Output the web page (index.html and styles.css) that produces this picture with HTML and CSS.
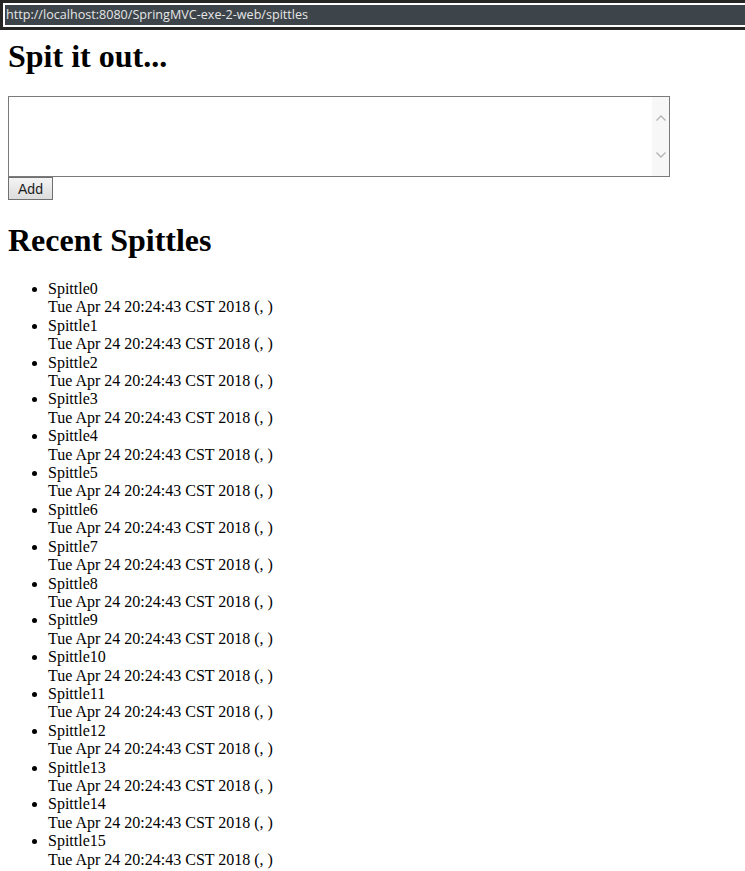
FILE: index.html
```html
<!DOCTYPE html>
<html lang="en">
<head>
    <meta charset="UTF-8">
    <title>Spittr</title>
    <link rel="stylesheet" href="styles.css">
</head>
<body>
    <div class="addressbar">
        <div class="url">http://localhost:8080/SpringMVC-exe-2-web/spittles</div>
    </div>
    <div class="page">
        <h1>Spit it out...</h1>
        <form class="spitForm">
            <div class="msgbox">
                <textarea name="message"></textarea>
                <div class="scroll">
                    <svg width="12" height="8" viewBox="0 0 12 8"><path d="M1.5 6.5 L6 2 L10.5 6.5" fill="none" stroke="#b4b4b4" stroke-width="1.4"/></svg>
                    <svg width="12" height="8" viewBox="0 0 12 8"><path d="M1.5 1.5 L6 6 L10.5 1.5" fill="none" stroke="#b4b4b4" stroke-width="1.4"/></svg>
                </div>
            </div>
            <button type="button" class="addBtn">Add</button>
        </form>
        <h1 class="recent">Recent Spittles</h1>
        <ul class="spittleList" id="spittleList"></ul>
    </div>

    <script>
        const list = document.getElementById('spittleList');
        for (let i = 0; i < 16; i++) {
            const li = document.createElement('li');
            li.innerHTML = '<div class="spittleMessage">Spittle' + i + '</div>' +
                '<div class="spittleTime">Tue Apr 24 20:24:43 CST 2018 (, )</div>';
            list.appendChild(li);
        }
    </script>
</body>
</html>
```

FILE: styles.css
```css
body {
    margin: 0;
    font-family: "Liberation Serif", "Times New Roman", serif;
    font-size: 16px;
    color: #000;
    background: #fff;
}
.addressbar {
    height: 30px;
    box-sizing: border-box;
    padding: 3px 0 3px 3px;
    background-color: #262624;
}
.url {
    height: 24px;
    box-sizing: border-box;
    border: 2px solid #fff;
    border-right: none;
    background-color: #3d454b;
    color: #e6e6e6;
    font-family: "Open Sans", "DejaVu Sans", sans-serif;
    font-size: 12.6px;
    line-height: 19px;
    padding-left: 1px;
    white-space: nowrap;
}
.page {
    padding: 0 8px;
}
h1 {
    font-size: 32px;
    font-weight: bold;
    line-height: 37px;
    margin: 8px 0 21px;
}
.msgbox {
    display: flex;
    width: 662px;
    height: 81px;
    box-sizing: border-box;
    border: 1px solid #7a7a7a;
    background: #fff;
}
.msgbox textarea {
    flex: 1;
    border: none;
    outline: none;
    resize: none;
    padding: 2px;
    font-family: "Liberation Mono", monospace;
    font-size: 13px;
}
.scroll {
    width: 17px;
    background-color: #f7f7f7;
    display: flex;
    flex-direction: column;
    justify-content: space-between;
    align-items: center;
    padding: 17px 0 17px;
}
.addBtn {
    display: block;
    width: 45px;
    height: 23px;
    padding: 0;
    border: 1px solid #707070;
    background: linear-gradient(#f4f4f4, #dcdcdc);
    font-family: "Liberation Sans", Arial, sans-serif;
    font-size: 14px;
    color: #1e1e1e;
}
.recent {
    margin-top: 22px;
}
.spittleList {
    margin: 2px 0 0;
    padding-left: 40px;
    line-height: 18.4px;
}
```
